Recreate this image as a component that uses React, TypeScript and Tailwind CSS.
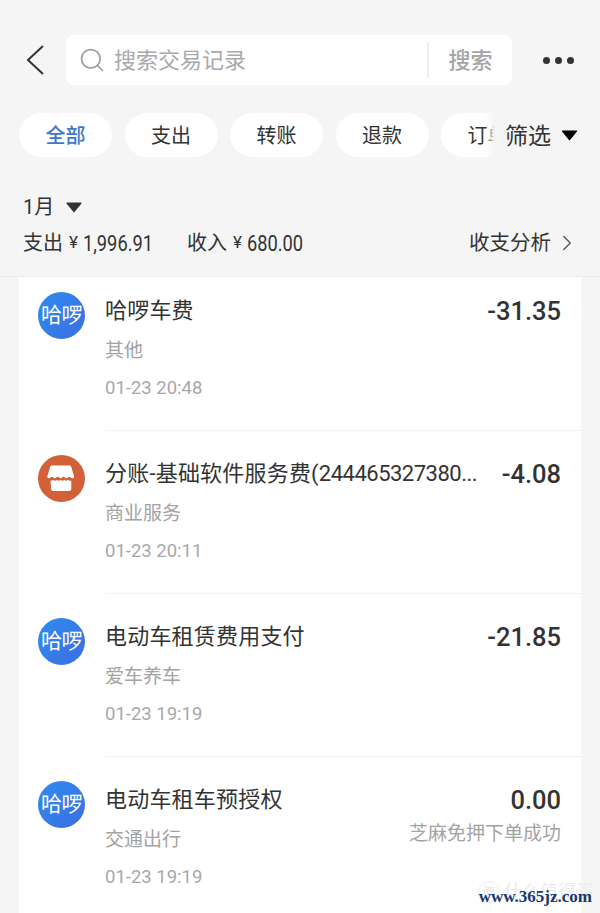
import { ChevronRight, Search } from 'lucide-react';

const cjk = "font-['Roboto','Noto_Sans_CJK_SC',sans-serif]";

const chips = ['全部', '支出', '转账', '退款', '订单'];

const rows = [
    { logo: 'hello', title: '哈啰车费', amount: '-31.35', sub: '其他', time: '01-23 20:48' },
    { logo: 'shop', title: '分账-基础软件服务费(', digits: '244465327380...', amount: '-4.08', sub: '商业服务', time: '01-23 20:11' },
    { logo: 'hello', title: '电动车租赁费用支付', amount: '-21.85', sub: '爱车养车', time: '01-23 19:19' },
    { logo: 'hello', title: '电动车租车预授权', amount: '0.00', sub: '交通出行', time: '01-23 19:19', note: '芝麻免押下单成功' },
];

function Caret({ className }: { className: string }) {
    return (
        <svg viewBox="0 0 16 12" className={className}>
            <path d="M1 1.5h14a.6.6 0 0 1 .5 1L8.5 11a.7.7 0 0 1-1 0L.5 2.5a.6.6 0 0 1 .5-1z" fill="currentColor" />
        </svg>
    );
}

function Logo({ type }: { type: string }) {
    if (type === 'shop') {
        return (
            <svg viewBox="0 0 47 47" className="h-[47px] w-[47px] shrink-0">
                <circle cx="23.5" cy="23.5" r="23.5" fill="#d2613a" />
                <path d="M15.5 10.500h16c.8 0 1.400.4 1.700 1.200l2.800 9.300c.4 1.600-.5 2.500-1.800 2.300-1.200-.2-1.700-1.500-2.900-1.500s-1.700 1.500-2.900 1.500-1.700-1.500-2.900-1.500-1.700 1.500-2.900 1.500-1.700-1.500-2.900-1.500-1.700 1.500-2.900 1.500-1.700-1.500-2.900-1.500c-1 0-1.800 1.700-3 1.500-1.300-.2-1.900-1-1.500-2.300l2.800-9.300c.3-.8.900-1.200 1.700-1.200z" fill="#fff" />
                <path d="M12.500 26.200c1 .3 1.900 0 2.700-.9 1.300 1.200 2.500 1.200 3.700 0 1.200 1.200 2.500 1.200 3.700 0 1.200 1.200 2.500 1.200 3.700 0 1.200 1.200 2.500 1.200 3.700 0 .9.900 1.800 1.200 3.300.9v8c0 1.300-1 2.300-2.300 2.300h-15.600c-1.300 0-2.300-1-2.300-2.300z" fill="#fff" transform="translate(0 -.5)" />
            </svg>
        );
    }
    return (
        <div className="flex h-[47px] w-[47px] shrink-0 items-center justify-center rounded-full bg-gradient-to-br from-[#2f8bf2] to-[#3a6fe0] text-[21px] leading-none tracking-[-0.5px] text-white">
            哈啰
        </div>
    );
}

function Total({ label, value, width, className = '' }: { label: string; value: string; width: string; className?: string }) {
    return (
        <span className={`flex items-center ${className}`}>
            <span className="text-[20px]">{label}</span>
            <span className="ml-[6px] text-[17px]">¥</span>
            <span className={`ml-[5px] inline-block origin-left scale-x-[0.83] whitespace-nowrap text-[22px] ${width}`}>{value}</span>
        </span>
    );
}

export default function App() {
    return (
        <div className={`relative h-[913px] w-[600px] overflow-hidden bg-[#f5f5f5] ${cjk}`}>
            <div className="flex items-center pt-[35px] pl-[25px] pr-[26px]">
                <svg viewBox="0 0 20 32" className="h-[32px] w-[20px] text-[#333]">
                    <path d="M18 2 3 16l15 14" fill="none" stroke="currentColor" strokeWidth="2" />
                </svg>
                <div className="ml-[21px] flex h-[50px] w-[446px] items-center rounded-lg bg-white pl-[12px]">
                    <Search className="h-[28px] w-[28px] text-[#a0a0a0]" strokeWidth={1.5} />
                    <span className="ml-[8px] flex-1 text-[22px] text-[#a9a9a9]">搜索交易记录</span>
                    <div className="h-[36px] w-[2px] bg-[#eeeeee]" />
                    <span className="w-[83px] text-center text-[22px] font-medium text-[#a5a5a5]">搜索</span>
                </div>
                <div className="ml-auto flex gap-[5px]">
                    <span className="h-[7px] w-[7px] rounded-full bg-[#333]" />
                    <span className="h-[7px] w-[7px] rounded-full bg-[#333]" />
                    <span className="h-[7px] w-[7px] rounded-full bg-[#333]" />
                </div>
            </div>

            <div className="mt-[28px] flex items-center pl-[19px]">
                <div className="relative flex w-[480px] gap-[12.5px] overflow-hidden">
                    {chips.map((chip, i) => (
                        <div
                            key={chip}
                            className={`flex h-[44px] w-[93px] shrink-0 items-center justify-center rounded-full bg-white pt-[2px] text-[20px] ${
                                i === 0 ? 'font-medium text-[#3f78c9]' : 'text-[#333]'
                            }`}
                        >
                            {chip}
                        </div>
                    ))}
                    <div className="absolute top-0 right-0 h-full w-[14px] bg-gradient-to-r from-transparent to-[#f5f5f5] to-70%" />
                </div>
                <span className="ml-[6px] pt-[4px] text-[23px] text-[#333]">筛选</span>
                <Caret className="ml-[10px] h-[12px] w-[17px] text-black" />
            </div>

            <div className="mt-[35px] flex items-center pl-[23px] text-[20px] leading-[30px] text-[#333]">
                1月
                <Caret className="ml-[12px] h-[12px] w-[16px] text-[#333]" />
            </div>
            <div className="mt-[3px] flex h-[36px] items-center pl-[23px] pr-[20px] text-[#333]">
                <Total label="支出" value="1,996.91" width="w-[68px]" />
                <Total label="收入" value="680.00" width="w-[57px]" className="ml-[36px]" />
                <span className="ml-auto text-[20.500px]">收支分析</span>
                <ChevronRight className="ml-[3px] h-[26px] w-[26px] text-[#555]" strokeWidth={1.25} />
            </div>

            <div className="mt-[15px] border-t border-[#ececec] px-[19px]">
                <div className="bg-white">
                    {rows.map((row, i) => (
                        <div key={i} className="flex h-[163px] pt-[15px] pl-[19px]">
                            <Logo type={row.logo} />
                            <div className={`ml-[20px] h-[139px] min-w-0 flex-1 ${i < rows.length - 1 ? 'border-b border-[#f2f2f2]' : ''}`}>
                                <div className="flex items-center justify-between pr-[20px] pt-[2px]">
                                    <span className="whitespace-nowrap text-[22px] leading-[34px] tracking-[0.2px] text-[#333]">
                                        {row.title}
                                        {row.digits && <span className="tracking-[-0.5px]">{row.digits}</span>}
                                    </span>
                                    <span className="text-[25.500px] leading-[34px] font-medium text-[#333]">{row.amount}</span>
                                </div>
                                <div className="mt-[6px] flex items-center justify-between pr-[20px]">
                                    <span className="text-[19px] leading-[34px] text-[#a3a3a3]">{row.sub}</span>
                                    {row.note && <span className="mt-[-12px] text-[19px] leading-[34px] text-[#a3a3a3]">{row.note}</span>}
                                </div>
                                <div className="mt-[3px] text-[18.5px] leading-[34px] text-[#a8a8a8]">{row.time}</div>
                            </div>
                        </div>
                    ))}
                </div>
            </div>

            <div className="absolute right-[6px] bottom-[10px] flex items-center text-[18px] leading-[20px] text-[#ececec]">
                <span className="flex h-[22px] w-[22px] items-center justify-center rounded-full border border-[#ececec] text-[14px]">值</span>
                <span className="ml-[4px]">什么值得买</span>
            </div>
            <div className="absolute right-[8px] bottom-[6px] font-['Liberation_Serif',serif] text-[17px] leading-[20px] font-bold text-[#17396f]">
                www.365jz.com
            </div>
        </div>
    );
}
